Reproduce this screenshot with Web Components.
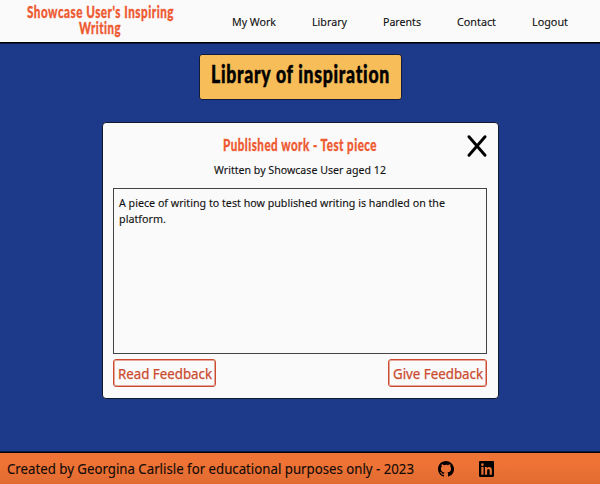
<!DOCTYPE html>
<html lang="en">
<head>
<meta charset="utf-8">
<title>Library of inspiration</title>
<style>
html,body{margin:0;height:100%;overflow:hidden}
body{background:#1d398a;font-family:"Noto Sans","Open Sans",sans-serif;color:#111}
</style>
</head>
<body>
<library-page></library-page>
<script>
const attach = (el, html) => { el.attachShadow({mode:'open'}).innerHTML = html; };

/* One line of text condensed horizontally to the width given in its attribute. */
customElements.define('fit-text', class extends HTMLElement {
  connectedCallback() {
    if (this.shadowRoot) return;
    attach(this, `<style>:host{display:block;white-space:nowrap;flex:none}span{display:inline-block;transform-origin:0 50%;vertical-align:top}</style><span><slot></slot></span>`);
    const w = +this.getAttribute('width');
    this.style.width = w + 'px';
    const s = this.shadowRoot.querySelector('span');
    s.style.transform = `scaleX(${w / s.getBoundingClientRect().width})`;
  }
});

customElements.define('site-header', class extends HTMLElement {
  connectedCallback() {
    attach(this, `<style>
      :host{display:flex;box-sizing:border-box;height:43px;background:#fafafa;border-bottom:1px solid #000;box-shadow:0 1px #0c1a48;flex:none}
      .brand{width:200px;padding-top:4px;display:flex;flex-direction:column;align-items:center;font:900 16px/16px Lato,sans-serif;letter-spacing:.7px;-webkit-text-stroke:.3px #ee5a32;color:#ee5a32}
      nav{display:flex;padding:14px 0 0 32px;font-size:11px;line-height:15px;-webkit-text-stroke:.12px #111}
      fit-text.gap36{margin-right:36px}
    </style>
    <div class="brand"><fit-text width="147">Showcase User's Inspiring</fit-text><fit-text width="42">Writing</fit-text></div>
    <nav><fit-text class="gap36" width="44">My Work</fit-text><fit-text class="gap36" width="35">Library</fit-text><fit-text class="gap36" width="38">Parents</fit-text><fit-text class="gap36" width="39">Contact</fit-text><fit-text width="36">Logout</fit-text></nav>`);
  }
});

customElements.define('page-title', class extends HTMLElement {
  connectedCallback() {
    attach(this, `<style>
      :host{display:flex;justify-content:center;box-sizing:border-box;width:203px;height:46px;margin:11px 0 0 0;padding-top:3px;background:#f7bd59;border:1px solid #111c3c;border-radius:3px;font:900 24px/32px Lato,sans-serif;letter-spacing:1px;-webkit-text-stroke:.5px #000;color:#000;flex:none}
    </style><slot></slot>`);
  }
});

customElements.define('feedback-button', class extends HTMLElement {
  connectedCallback() {
    attach(this, `<style>
      :host{display:block;border:1px solid #cb4a30;box-shadow:inset 0 0 0 1px #e5a799;border-radius:3px;box-sizing:border-box;height:28px}
      button{all:unset;display:flex;height:100%;box-sizing:border-box;padding:4px 3.5px 0 3.5px;font:14px/19px "Noto Sans",sans-serif;color:#cb4a30;-webkit-text-stroke:.25px #cb4a30}
    </style><button><slot></slot></button>`);
  }
});

customElements.define('work-card', class extends HTMLElement {
  connectedCallback() {
    attach(this, `<style>
      :host{display:flex;flex-direction:column;box-sizing:border-box;width:397px;height:277px;margin:22px 0 0 1px;padding:10px 11px 11px 10px;background:#fafafa;border:1px solid #10182c;border-radius:4px;flex:none}
      .head{display:grid;grid-template-columns:1fr auto 1fr;height:55px;flex:none}
      .titles{grid-column:2;display:flex;flex-direction:column;align-items:center}
      .title{font:900 17px/24px Lato,sans-serif;letter-spacing:.7px;-webkit-text-stroke:.3px #ee5a32;color:#ee5a32}
      .by{font-size:11.3px;line-height:16px;margin-top:5px}
      .close{justify-self:end;margin-top:2px}
      .writing{box-sizing:border-box;height:166px;border:1px solid #444;padding:6px 5px;font-size:11.3px;line-height:16px;flex:none}
      .by,.writing{-webkit-text-stroke:.12px #111}
      .actions{display:flex;justify-content:space-between;margin-top:5px}
    </style>
    <div class="head"><div class="titles"><fit-text class="title" width="154">Published work - Test piece</fit-text><fit-text class="by" width="172">Written by Showcase User aged 12</fit-text></div>
    <svg class="close" width="20" height="22" viewBox="0 0 20 22" fill="none" stroke="#000" stroke-width="2.9" stroke-linecap="round"><path d="M2 1.7 18 20.3M18 1.7 2 20.3"/></svg></div>
    <div class="writing"><fit-text width="326">A piece of writing to test how published writing is handled on the</fit-text><fit-text width="47">platform.</fit-text></div>
    <div class="actions"><feedback-button><fit-text width="94">Read Feedback</fit-text></feedback-button><feedback-button><fit-text width="90">Give Feedback</fit-text></feedback-button></div>`);
  }
});

customElements.define('site-footer', class extends HTMLElement {
  connectedCallback() {
    attach(this, `<style>
      :host{display:flex;box-sizing:border-box;height:32px;margin-top:auto;padding-left:7px;background:linear-gradient(#ef7335 35%,#e06b32);border-top:1px solid #000;box-shadow:0 -1px #0c1a48;flex:none}
      fit-text{font-size:14px;line-height:19px;padding-top:6px;color:#120b08;-webkit-text-stroke:.12px #120b08}
      svg{margin-top:8px}
      .gh{margin-left:24px}.li{margin-left:25px}
    </style>
    <fit-text width="407">Created by Georgina Carlisle for educational purposes only - 2023</fit-text>
    <svg class="gh" width="16" height="16" viewBox="0 0 16 16" fill="#000"><path d="M8 0C3.58 0 0 3.58 0 8c0 3.54 2.29 6.53 5.47 7.59.4.07.55-.17.55-.38 0-.19-.01-.82-.01-1.49-2.01.37-2.53-.49-2.69-.94-.09-.23-.48-.94-.82-1.13-.28-.15-.68-.52-.01-.53.63-.01 1.08.58 1.23.82.72 1.21 1.87.87 2.33.66.07-.52.28-.87.51-1.07-1.78-.2-3.64-.89-3.64-3.95 0-.87.31-1.59.82-2.15-.08-.2-.36-1.02.08-2.12 0 0 .67-.21 2.2.82A7.6 7.6 0 0 1 8 3.86c.68 0 1.36.09 2 .27 1.53-1.04 2.2-.82 2.2-.82.44 1.1.16 1.92.08 2.12.51.56.82 1.27.82 2.15 0 3.07-1.87 3.75-3.65 3.95.29.25.54.73.54 1.48 0 1.07-.01 1.93-.01 2.2 0 .21.15.46.55.38A8 8 0 0 0 8 0Z"/></svg>
    <svg class="li" width="15" height="16" viewBox="0 0 448 448" preserveAspectRatio="none" fill="#000"><path d="M416 0H31.900C14.300 0 0 14.500 0 32.300v383.400C0 433.500 14.300 448 31.900 448H416c17.600 0 32-14.500 32-32.300V32.300C448 14.500 433.600 0 416 0ZM135.400 384H69V170.200h66.500V384ZM102.200 141a38.500 38.500 0 1 1 0-77 38.500 38.500 0 0 1 0 77ZM384.300 384h-66.400V280c0-24.800-.5-56.700-34.500-56.700-34.600 0-39.900 27-39.900 54.900V384h-66.400V170.200h63.700v29.200h.9c8.900-16.800 30.600-34.500 62.900-34.500 67.200 0 79.700 44.300 79.700 101.900V384Z"/></svg>`);
  }
});

customElements.define('library-page', class extends HTMLElement {
  connectedCallback() {
    attach(this, `<style>
      :host{display:flex;flex-direction:column;height:100vh}
      main{display:flex;flex-direction:column;align-items:center}
    </style>
    <site-header></site-header>
    <main><page-title><fit-text width="179">Library of inspiration</fit-text></page-title><work-card></work-card></main>
    <site-footer></site-footer>`);
  }
});
</script>
</body>
</html>
